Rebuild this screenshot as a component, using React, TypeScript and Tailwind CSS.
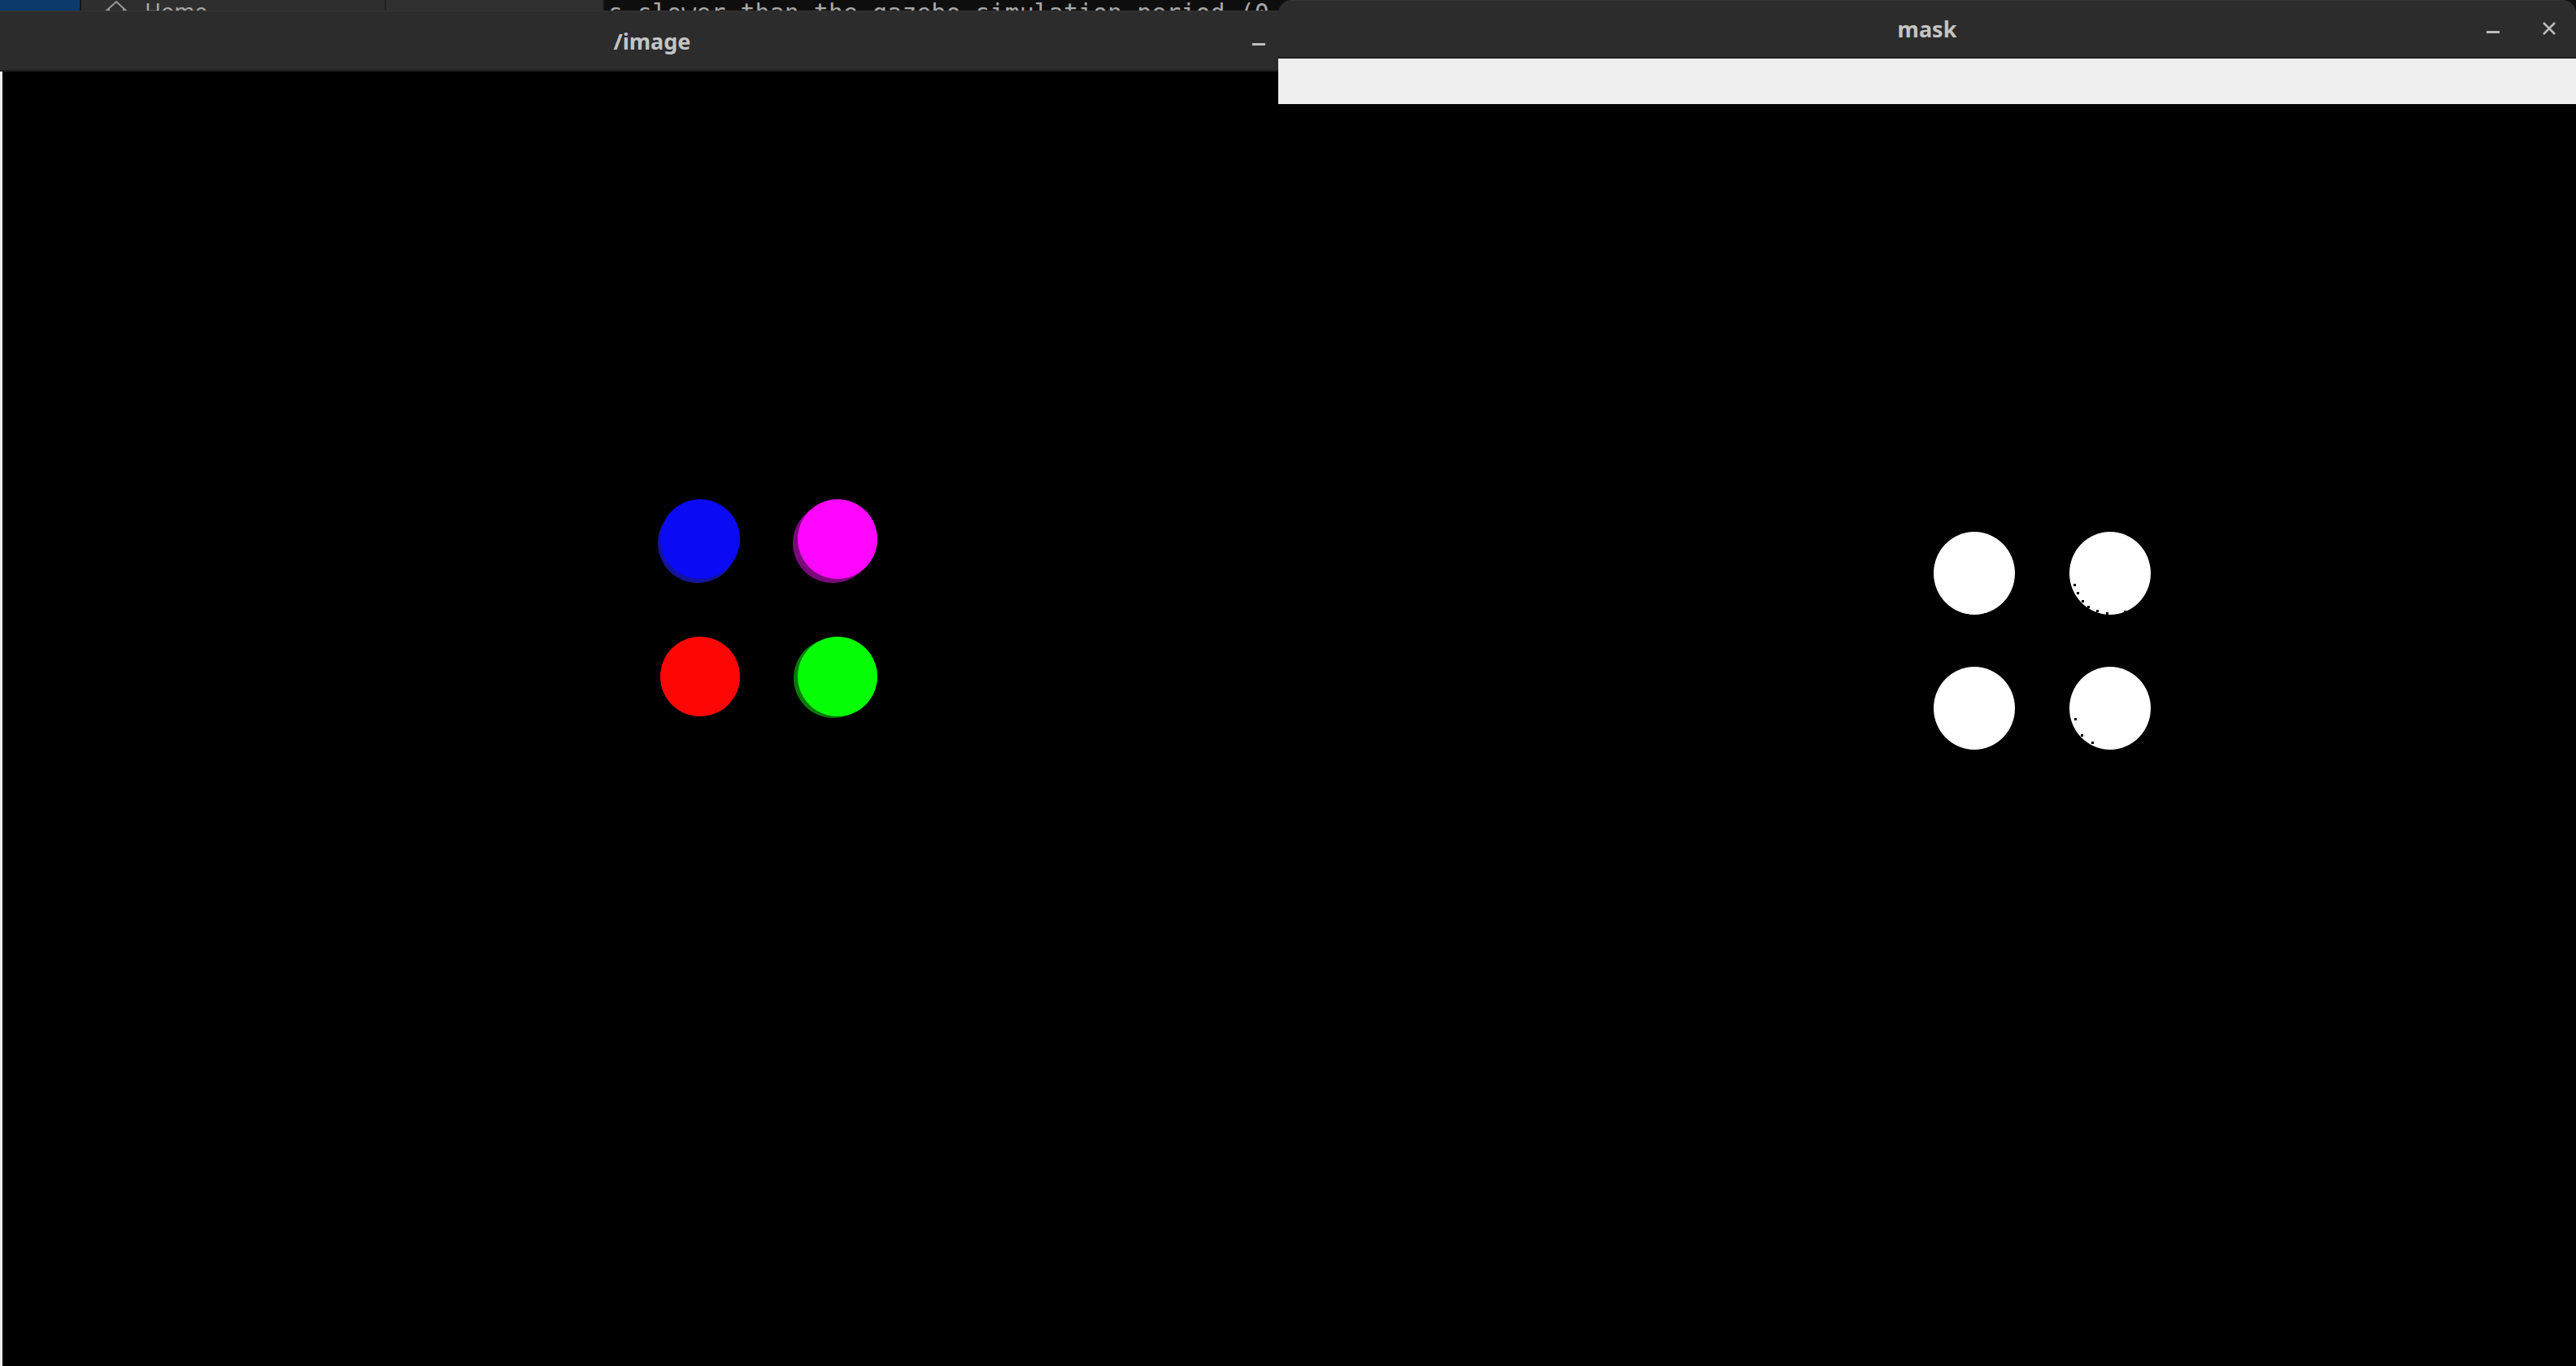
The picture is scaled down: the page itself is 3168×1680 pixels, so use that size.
import React from "react";

type Dot = { cx: number; cy: number; fill: string; shadow?: string; dx?: number; dy?: number };

const imageDots: Dot[] = [
    { cx: 858, cy: 575, fill: "#0a0af5", shadow: "#14149a", dx: -3, dy: 5 },
    { cx: 1027, cy: 575, fill: "#ff06ff", shadow: "#7a0a7a", dx: -6, dy: 5 },
    { cx: 858, cy: 744, fill: "#ff0606" },
    { cx: 1027, cy: 744, fill: "#06ff06", shadow: "#0a7a0a", dx: -5, dy: 2 },
];

const maskDots = [
    { cx: 856, cy: 577 },
    { cx: 1023, cy: 577 },
    { cx: 856, cy: 743 },
    { cx: 1023, cy: 743 },
];

// small holes the threshold left along the lower-left rims
const maskSpecks = [
    [823, 618], [835, 625], [846, 627], [868, 626], [882, 622],
    [978, 590], [982, 600], [988, 610], [995, 617], [1006, 622], [1018, 625], [1040, 623],
    [979, 755], [987, 775], [1000, 784],
];

const HomeIcon: React.FC = () => (
    <svg width="30" height="28" viewBox="0 0 30 28" className="shrink-0">
        <path d="M2 14 L15 2 L28 14 M6 11 V28 M24 11 V28" fill="none" stroke="#9a9a9a" strokeWidth="2" />
    </svg>
);

const TitleBar: React.FC<{ title: string; className: string; showClose?: boolean }> = ({ title, className, showClose }) => (
    <div className={`relative bg-[#2c2c2c] border-t border-[#353535] border-b-2 border-b-[#1e1e1e] flex items-center justify-center ${className}`}>
        <span className="text-[27px] font-bold text-[#c4c4c4] font-['Noto_Sans',sans-serif] leading-none">{title}</span>
        <div className={`absolute right-0 top-0 bottom-0 flex items-center gap-[52px] ${showClose ? "pr-[24px]" : "pr-[48px]"}`}>
            <div className="w-[16px] h-[3px] bg-[#bcbcbc] mt-[8px]" />
            {showClose && (
                <svg width="18" height="18" viewBox="0 0 18 18" className="-mt-[2px]">
                    <path d="M2 2 L16 16 M16 2 L2 16" stroke="#bcbcbc" strokeWidth="2.5" />
                </svg>
            )}
        </div>
    </div>
);

const App: React.FC = () => {
    return (
        <div className="relative w-[3168px] h-[1680px] bg-black overflow-hidden">
            {/* Desktop behind the windows */}
            <div className="flex h-[16px] overflow-hidden">
                <div className="w-[98px] bg-[#0b3a6b]" />
                <div className="w-[2px] bg-[#151515]" />
                <div className="w-[375px] bg-[#2e2e2e] flex items-start gap-[20px] pl-[28px] border-r-2 border-[#202020]">
                    <HomeIcon />
                    <span className="text-[27px] leading-none text-[#a8a8a8] font-['Noto_Sans',sans-serif]">Home</span>
                </div>
                <div className="w-[268px] bg-[#303030] border-r-2 border-[#202020]" />
                <div className="flex-1 bg-[#0e0e0e] pl-[5px]">
                    <span className="whitespace-pre text-[30px] leading-none text-[#a9a9a9] font-['DejaVu_Sans_Mono',monospace] block pt-[1px]">
                        s slower than the gazebo simulation period (0.1)
                    </span>
                </div>
            </div>

            {/* /image window */}
            <div className="absolute left-0 top-[13px] w-[1604px] bottom-0 flex flex-col">
                <TitleBar title="/image" className="h-[75px]" />
                <div className="flex-1 bg-black border-l-[3px] border-[#ececec]">
                    <svg width="1601" height="1592" className="block">
                        {imageDots.map((d, i) =>
                            d.shadow ? (
                                <circle key={"s" + i} cx={d.cx + (d.dx ?? 0)} cy={d.cy + (d.dy ?? 0)} r="49" fill={d.shadow} />
                            ) : null
                        )}
                        {imageDots.map((d, i) => (
                            <circle key={i} cx={d.cx} cy={d.cy} r="49" fill={d.fill} />
                        ))}
                    </svg>
                </div>
            </div>

            {/* mask window */}
            <div className="absolute left-[1572px] top-0 right-0 bottom-0 flex flex-col rounded-t-[16px] overflow-hidden">
                <TitleBar title="mask" className="h-[72px] rounded-t-[16px]" showClose />
                <div className="h-[56px] bg-[#efefef]" />
                <div className="flex-1 bg-black">
                    <svg width="1596" height="1552" className="block">
                        {maskDots.map((d, i) => (
                            <ellipse key={i} cx={d.cx} cy={d.cy} rx="50" ry="51" fill="#ffffff" />
                        ))}
                        {maskSpecks.map(([x, y], i) => (
                            <rect key={i} x={x} y={y} width="3" height="3" fill="#000" />
                        ))}
                    </svg>
                </div>
            </div>
        </div>
    );
};

export default App;
